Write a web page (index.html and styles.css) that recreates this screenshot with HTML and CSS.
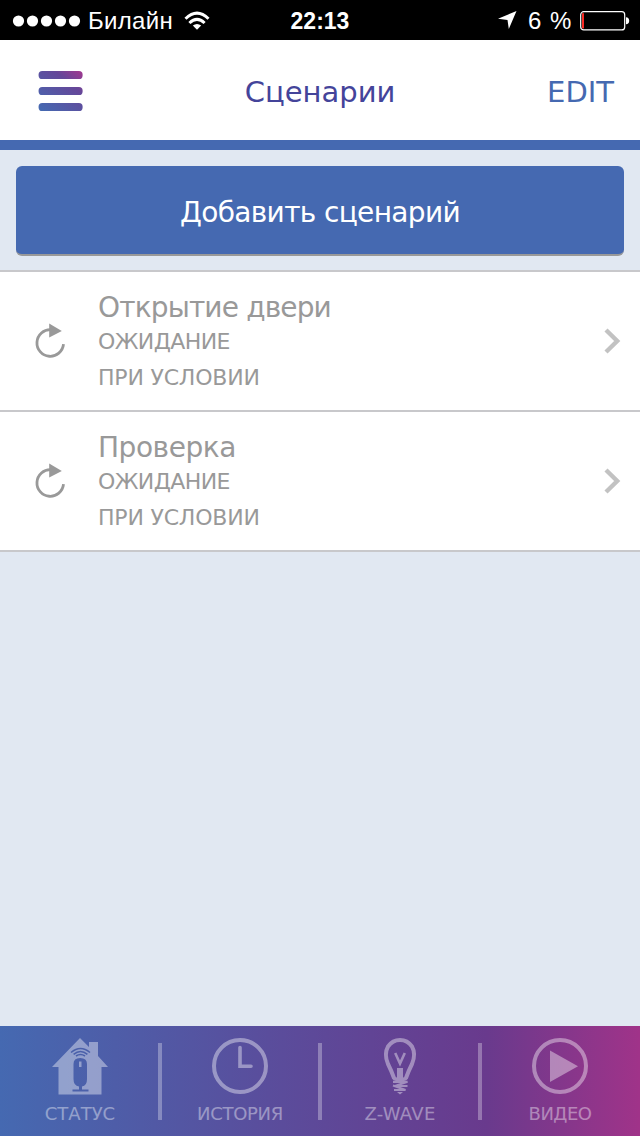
FILE: index.html
```html
<!DOCTYPE html>
<html lang="ru">
<head>
<meta charset="utf-8">
<title>Сценарии</title>
<link rel="stylesheet" href="styles.css">
</head>
<body>
<div class="statusbar">
  <div class="carrier">
    <svg width="70" height="12" viewBox="0 0 70 12" fill="#fff"><circle cx="6.5" cy="6" r="5.6"/><circle cx="20.5" cy="6" r="5.6"/><circle cx="34.5" cy="6" r="5.6"/><circle cx="48.5" cy="6" r="5.6"/><circle cx="62.5" cy="6" r="5.6"/></svg>
    <span class="carrier-name">Билайн</span>
    <svg class="wifi" width="26" height="20" viewBox="0 0 26 20" fill="none" stroke="#fff" stroke-width="3"><path d="M1.5 7.8Q13 -3.4 24.500 7.800"/><path d="M5.400 12Q13 4.800 20.600 12"/><path d="M13 18.800L8.800 14.600Q13 11.400 17.200 14.600Z" fill="#fff" stroke="none"/></svg>
  </div>
  <span class="time">22:13</span>
  <div class="power">
    <svg width="19" height="19" viewBox="0 0 19 19" fill="#fff"><path d="M18.500 0L10.800 18L9.500 9L0 7.800Z"/></svg>
    <span class="percent">6 %</span>
    <svg width="50" height="20" viewBox="0 0 50 20"><rect x=".7" y=".7" width="44" height="18.200" rx="3" fill="none" stroke="#fff" stroke-width="1.200"/><rect x="2" y="2.200" width="2" height="15.200" fill="#fa2a24"/><path d="M46 6.200Q49.200 6.600 49.200 9.800T46 13.300Z" fill="#fff"/></svg>
  </div>
</div>
<header class="header">
  <svg class="menu" width="46" height="42" viewBox="0 0 46 42"><defs><linearGradient id="menuFill" gradientUnits="userSpaceOnUse" x1="5" y1="42" x2="40" y2="0"><stop offset="0" stop-color="#4569b1"/><stop offset=".72" stop-color="#654799"/><stop offset="1" stop-color="#9b3a90"/></linearGradient></defs><g fill="url(#menuFill)"><rect x=".6" y="1" width="44" height="8" rx="3.600"/><rect x=".6" y="17" width="44" height="8" rx="3.600"/><rect x=".6" y="33" width="44" height="8" rx="3.600"/></g></svg>
  <h1 class="title">Сценарии</h1>
  <span class="edit">EDIT</span>
</header>
<main class="content">
  <div class="add-area"><div class="add">Добавить сценарий</div></div>
  <div class="row">
    <svg class="reload" width="34" height="36" viewBox="0 0 34 36"><path d="M17 6.700A13.300 13.300 0 1 0 29.500 21.200" fill="none" stroke="#999" stroke-width="2.800"/><path d="M15.200 .5L27.800 7.900L15.200 14.500Z" fill="#999"/></svg>
    <div class="info"><div class="name n1">Открытие двери</div><div class="state s1">ОЖИДАНИЕ</div><div class="state s2">ПРИ УСЛОВИИ</div></div>
    <svg class="chevron" width="18" height="26" viewBox="0 0 18 26"><path d="M2 2L13.200 13L2 24" fill="none" stroke="#c2c2c2" stroke-width="4.400"/></svg>
  </div>
  <div class="row">
    <svg class="reload" width="34" height="36" viewBox="0 0 34 36"><path d="M17 6.700A13.300 13.300 0 1 0 29.500 21.200" fill="none" stroke="#999" stroke-width="2.800"/><path d="M15.200 .5L27.800 7.900L15.200 14.500Z" fill="#999"/></svg>
    <div class="info"><div class="name n2">Проверка</div><div class="state s1">ОЖИДАНИЕ</div><div class="state s2">ПРИ УСЛОВИИ</div></div>
    <svg class="chevron" width="18" height="26" viewBox="0 0 18 26"><path d="M2 2L13.200 13L2 24" fill="none" stroke="#c2c2c2" stroke-width="4.400"/></svg>
  </div>
</main>
<nav class="tabs">
  <div class="tab"><svg width="58" height="58" viewBox="0 0 58 58"><path fill="#fff" fill-rule="evenodd" d="M29 1L38 10V5H47V19L57 30H50.500V57.500H7.500V30H1ZM22.500 27V42Q22.500 49 28 49.500V52.500H21.500V54.500H37.500V52.500H31V49.500Q36 49 36 42V27Q36 21 29.200 21T22.500 27ZM28 24.500H30.500V30H28Z"/><g fill="none" stroke="#4b60aa" stroke-width="1.600"><path d="M20 15.500Q29.500 7.500 39 15.500M22.600 17.300Q29.500 11.800 36.400 17.300M25 19Q29.500 16 34 19"/></g></svg><span class="label l1">СТАТУС</span></div>
  <div class="tab"><svg width="58" height="58" viewBox="0 0 58 58" fill="none" stroke="#fff"><circle cx="29" cy="29" r="26" stroke-width="4"/><path d="M29 10.500V29.200H40" stroke-width="3.600" stroke-linecap="round"/></svg><span class="label l2">ИСТОРИЯ</span></div>
  <div class="tab"><svg width="58" height="58" viewBox="0 0 58 58"><g fill="none" stroke="#fff"><path d="M23 41Q20.500 34 17 27Q12.800 17 17 9.500Q21.500 3 29 3T41 9.500Q45.200 17 41 27Q37.500 34 35 41Q34 42.500 29 42.500T23 41Z" stroke-width="4"/><path d="M24.200 16L29 26.500L33.800 16" stroke-width="2.600"/><path d="M22 44.800H36.500L24 49H36.500M22 48.500L34.500 53H23" stroke-width="2.200"/></g><path fill="#fff" d="M26 31H32V41H26ZM26 55H32L29 57.500Z"/></svg><span class="label l3">Z-WAVE</span></div>
  <div class="tab"><svg width="58" height="58" viewBox="0 0 58 58"><circle cx="29" cy="29" r="26" fill="none" stroke="#fff" stroke-width="4"/><path d="M19 13.500L47 29.200L19 45Z" fill="#fff"/></svg><span class="label l4">ВИДЕО</span></div>
</nav>
</body>
</html>
```
FILE: styles.css
```css
* { box-sizing: border-box; }
body { margin: 0; width: 640px; height: 1136px; display: flex; flex-direction: column; background: #e1e8f2; font-family: "DejaVu Sans", sans-serif; overflow: hidden; }
svg { display: block; flex: none; }
.statusbar { height: 40px; background: #000; color: #fff; display: grid; grid-template-columns: 1fr 60px 1fr; font: 24px/40px "Liberation Sans", sans-serif; white-space: nowrap; }
.carrier { display: flex; align-items: center; padding-left: 12px; }
.carrier-name { margin-left: 6px; width: 85px; letter-spacing: .3px; }
.wifi { margin-left: 11px; }
.time { text-align: center; font-weight: bold; font-size: 23px; padding-top: 1px; }
.power { display: flex; align-items: center; justify-content: flex-end; padding-right: 10px; }
.percent { margin: 0 7px 0 11px; width: 45px; letter-spacing: 1px; }
.header { height: 110px; background: #fff; border-bottom: 10px solid #4569b1; display: grid; grid-template-columns: 200px 240px 200px; align-items: center; }
.menu { margin: 2px 0 0 38px; }
.title { margin: 3px 0 0; text-align: center; font-size: 29px; line-height: 40px; font-weight: normal; color: #44449a; }
.edit { margin: 3px 26px 0 0; text-align: right; font-size: 29px; line-height: 40px; color: #4569b1; }
.content { flex: 1; }
.add-area { height: 120px; padding: 16px 16px 14px; }
.add { height: 90px; border-radius: 6px; background: #4569b1; border-bottom: 2px solid #999; color: #fff; text-align: center; font-size: 28px; line-height: 94px; letter-spacing: -.65px; }
.row { height: 140px; border-top: 2px solid #c8c8cb; background: #fff; display: flex; align-items: center; padding: 0 18px 0 34px; color: #999; white-space: nowrap; }
.row:last-child { height: 142px; border-bottom: 2px solid #c8c8cb; }
.info { flex: 1; margin-left: 30px; height: 138px; padding-top: 18px; }
.name { font-size: 28px; line-height: 36px; height: 34px; }
.n1 { letter-spacing: -.85px; }
.n2 { letter-spacing: -.45px; }
.state { font-size: 22px; line-height: 36px; }
.s1 { letter-spacing: -.6px; }
.s2 { letter-spacing: -.2px; }
.tabs { height: 110px; display: grid; grid-template-columns: repeat(4, 1fr); background: linear-gradient(90deg, #4569b1 0%, #5a4d9c 42%, #693a8d 76%, #a03389 100%); }
.tab { position: relative; display: flex; flex-direction: column; align-items: center; padding-top: 11px; color: #fff; }
.tab > svg, .label { opacity: .4; }
.label { font-size: 18px; line-height: 24px; margin-top: 7px; white-space: nowrap; }
.l2 { letter-spacing: -.3px; }
.l3 { letter-spacing: .3px; }
.l4 { letter-spacing: -.5px; }
.tab:not(:last-child)::after { content: ""; position: absolute; right: -2px; top: 17px; width: 4px; height: 77px; background: rgba(255,255,255,.3); }
```
